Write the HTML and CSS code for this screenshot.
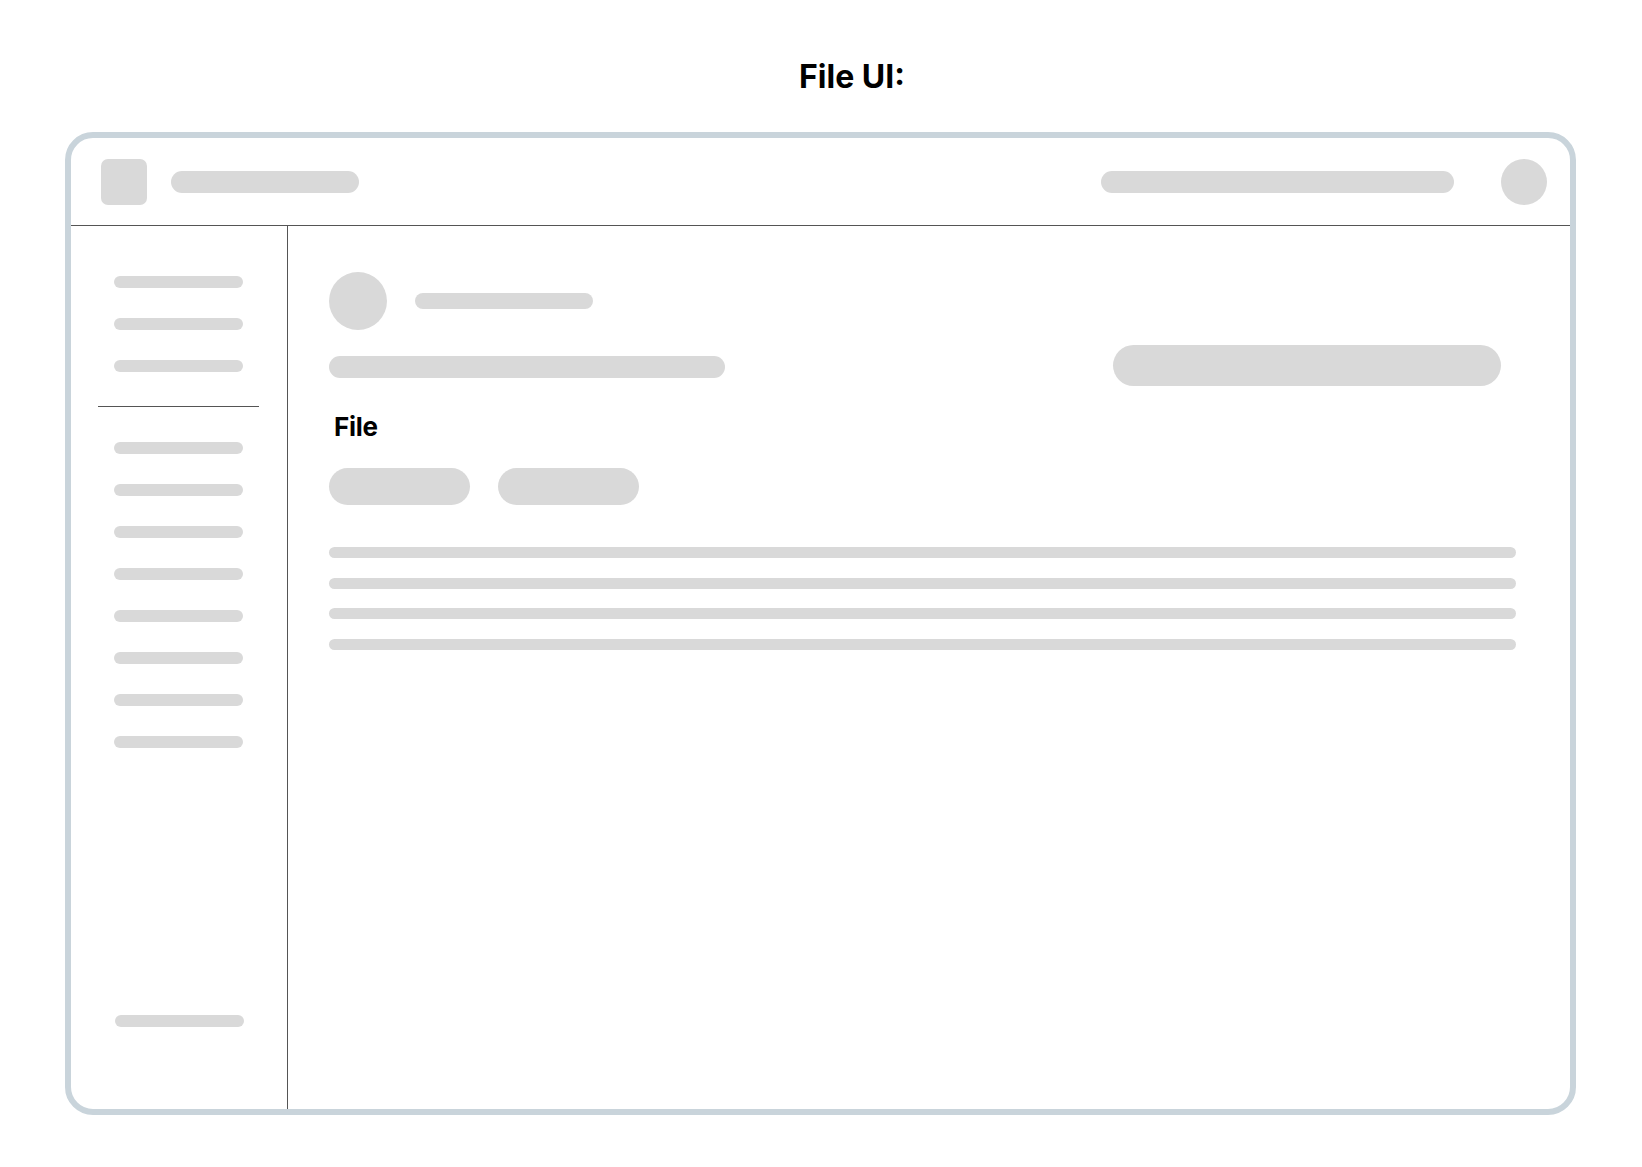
FILE: index.html
```html
<!DOCTYPE html>
<html lang="en">
<head>
<meta charset="utf-8">
<title>File UI</title>
<link rel="stylesheet" href="styles.css">
</head>
<body>
<h1 class="page-title">File UI:</h1>
<div class="frame">
  <header class="topbar">
    <div class="logo"></div>
    <div class="bar topbar-title"></div>
    <div class="spacer"></div>
    <div class="bar topbar-search"></div>
    <div class="avatar-sm"></div>
  </header>
  <div class="body">
    <aside class="sidebar">
      <div class="nav-group">
        <div class="bar nav-item"></div>
        <div class="bar nav-item"></div>
        <div class="bar nav-item"></div>
      </div>
      <div class="nav-divider"></div>
      <div class="nav-group">
        <div class="bar nav-item"></div>
        <div class="bar nav-item"></div>
        <div class="bar nav-item"></div>
        <div class="bar nav-item"></div>
        <div class="bar nav-item"></div>
        <div class="bar nav-item"></div>
        <div class="bar nav-item"></div>
        <div class="bar nav-item"></div>
      </div>
      <div class="bar nav-item nav-bottom"></div>
    </aside>
    <main class="main">
      <div class="user-row">
        <div class="avatar-lg"></div>
        <div class="bar user-name"></div>
      </div>
      <div class="meta-row">
        <div class="bar meta-bar"></div>
        <div class="bar meta-pill"></div>
      </div>
      <h2 class="section-title">File</h2>
      <div class="pill-row">
        <div class="bar pill"></div>
        <div class="bar pill"></div>
      </div>
      <div class="text-lines">
        <div class="bar text-line"></div>
        <div class="bar text-line"></div>
        <div class="bar text-line"></div>
        <div class="bar text-line"></div>
      </div>
    </main>
  </div>
</div>
</body>
</html>
```
FILE: styles.css
```css
* { box-sizing: border-box; }

html, body {
  margin: 0;
  padding: 0;
  background: #ffffff;
  font-family: Inter, "Noto Sans", "Liberation Sans", sans-serif;
  color: #000;
}

.page-title {
  margin: 0;
  padding-top: 57px;
  padding-left: 62px;
  height: 96px;
  font-size: 32px;
  line-height: 40px;
  font-weight: 700;
  letter-spacing: 0;
  text-align: center;
}

.frame {
  margin-top: 36px;
  margin-left: 65px;
  width: 1511px;
  height: 983px;
  border: 6px solid #c9d4db;
  border-radius: 28px;
  display: flex;
  flex-direction: column;
  overflow: hidden;
}

.bar { background: #d9d9d9; }

.topbar {
  height: 88px;
  flex: none;
  border-bottom: 1px solid #555555;
  display: flex;
  align-items: center;
  padding: 0 23px 0 30px;
}

.logo {
  width: 46px;
  height: 46px;
  border-radius: 7px;
  background: #d9d9d9;
  margin-right: 24px;
}

.topbar-title { width: 188px; height: 22px; border-radius: 11px; }
.spacer { flex: 1; }
.topbar-search { width: 353px; height: 22px; border-radius: 11px; margin-right: 47px; }

.avatar-sm {
  width: 46px;
  height: 46px;
  border-radius: 50%;
  background: #d9d9d9;
}

.body {
  flex: 1;
  display: flex;
  min-height: 0;
}

.sidebar {
  width: 217px;
  flex: none;
  border-right: 1px solid #555555;
  display: flex;
  flex-direction: column;
  padding: 50px 0 82px 0;
}

.nav-group {
  display: flex;
  flex-direction: column;
  gap: 30px;
  padding-left: 43px;
}

.nav-item { width: 129px; height: 12px; border-radius: 6px; }

.nav-divider {
  margin: 34px 0 35px 27px;
  width: 161px;
  height: 1px;
  background: #555555;
}

.nav-bottom { margin-top: auto; margin-left: 44px; }

.main {
  flex: 1;
  padding: 46px 54px 0 41px;
  display: flex;
  flex-direction: column;
}

.user-row {
  display: flex;
  align-items: center;
  height: 58px;
}

.avatar-lg {
  width: 58px;
  height: 58px;
  border-radius: 50%;
  background: #d9d9d9;
}

.user-name { width: 178px; height: 16px; border-radius: 8px; margin-left: 28px; }

.meta-row {
  margin-top: 15px;
  display: flex;
  justify-content: space-between;
  align-items: flex-start;
  padding-right: 15px;
}

.meta-bar { width: 396px; height: 22px; border-radius: 11px; margin-top: 11px; }
.meta-pill { width: 388px; height: 41px; border-radius: 20.5px; }

.section-title {
  margin: 26px 0 0 5px;
  font-size: 26px;
  line-height: 30px;
  font-weight: 700;
  letter-spacing: -0.3px;
}

.pill-row {
  margin-top: 26px;
  display: flex;
  gap: 28px;
}

.pill { width: 141px; height: 37px; border-radius: 18.5px; }

.text-lines {
  margin-top: 42px;
  display: flex;
  flex-direction: column;
  gap: 19.6px;
}

.text-line { height: 11px; border-radius: 5.5px; }
```
